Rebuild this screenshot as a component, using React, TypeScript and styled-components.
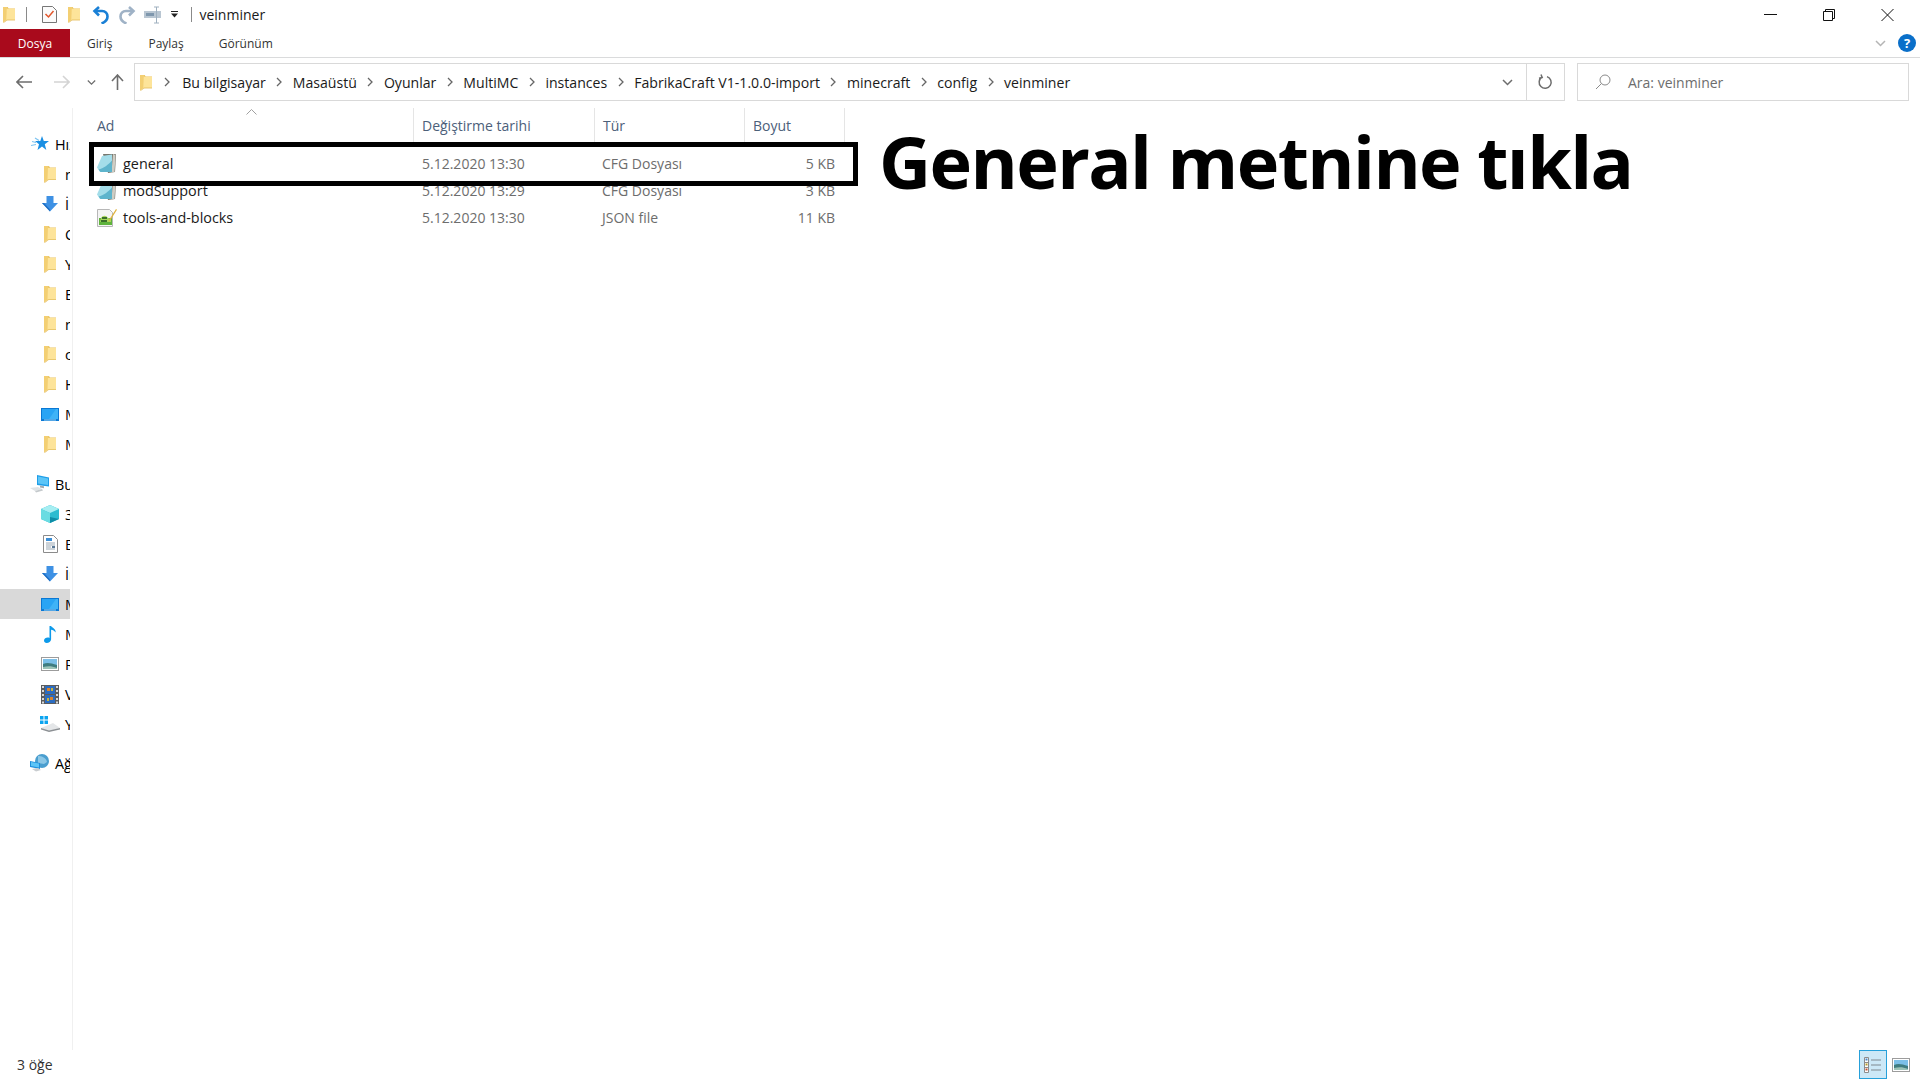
import React from 'react';
import styled, { createGlobalStyle } from 'styled-components';

const Global = createGlobalStyle`
  html, body { margin: 0; padding: 0; background: #fff; }
  body { font-family: "Open Sans", "Noto Sans", sans-serif; font-size: 14px; color: #1a1a1a; }
  svg { display: block; flex: none; }
`;

const Window = styled.div`
  width: 1920px;
  height: 1079px;
  display: flex;
  flex-direction: column;
  overflow: hidden;
  position: relative;
  background: #fff;
`;

const TitleBar = styled.div`
  height: 29px;
  display: flex;
  align-items: center;
  flex: none;
`;

const QuickSlot = styled.div<{ $left: number }>`
  margin-left: ${(p) => p.$left}px;
  display: flex;
  align-items: center;
`;

const VSep = styled.div<{ $left: number }>`
  margin-left: ${(p) => p.$left}px;
  width: 1px;
  height: 15px;
  background: #8a8a8a;
`;

const TitleText = styled.span`
  margin-left: 7px;
  font-size: 14px;
  color: #1a1a1a;
`;

const WindowButtons = styled.div`
  margin-left: auto;
  display: flex;
  align-items: center;
  gap: 46px;
  padding-right: 26px;
`;

const Tabs = styled.div`
  height: 28px;
  flex: none;
  display: flex;
  align-items: stretch;
  border-bottom: 1px solid #dadbdc;
  position: relative;
`;

const FileTab = styled.div`
  width: 70px;
  background: #a90a1c;
  color: #fff;
  font-size: 12px;
  display: flex;
  align-items: center;
  justify-content: center;
`;

const Tab = styled.div<{ $left: number }>`
  margin-left: ${(p) => p.$left}px;
  font-size: 12px;
  color: #333;
  display: flex;
  align-items: center;
`;

const RibbonEnd = styled.div`
  margin-left: auto;
  display: flex;
  align-items: center;
  gap: 11px;
  padding-right: 4px;
`;

const HelpDot = styled.div`
  width: 18px;
  height: 18px;
  border-radius: 50%;
  background: #0a6fc9;
  color: #fff;
  font-size: 13px;
  font-weight: 700;
  display: flex;
  align-items: center;
  justify-content: center;
`;

const NavRow = styled.div`
  height: 50px;
  flex: none;
  display: flex;
  align-items: flex-start;
  padding-top: 5px;
  box-sizing: border-box;
`;

const NavButtons = styled.div`
  width: 134px;
  height: 38px;
  flex: none;
  display: flex;
  align-items: center;
  padding-left: 16px;
  box-sizing: border-box;
`;

const NavSlot = styled.div<{ $left: number }>`
  margin-left: ${(p) => p.$left}px;
`;

const AddressBox = styled.div`
  width: 1431px;
  height: 38px;
  box-sizing: border-box;
  border: 1px solid #d9d9d9;
  display: flex;
  align-items: center;
  flex: none;
`;

const Crumbs = styled.div`
  flex: 1;
  display: flex;
  align-items: center;
  padding-left: 5px;
  height: 100%;
`;

const Crumb = styled.span`
  font-size: 14.1px;
  color: #1a1a1a;
  white-space: nowrap;
`;

const CrumbArrow = styled.div<{ $wide?: boolean }>`
  width: ${(p) => (p.$wide ? 30 : 27)}px;
  display: flex;
  justify-content: center;
  flex: none;
`;

const AddressEnd = styled.div`
  width: 38px;
  height: 100%;
  display: flex;
  align-items: center;
  justify-content: center;
  border-left: 1px solid #d9d9d9;
  box-sizing: border-box;
`;

const DropSlot = styled.div`
  width: 38px;
  display: flex;
  justify-content: center;
`;

const SearchBox = styled.div`
  width: 332px;
  height: 38px;
  margin-left: 12px;
  box-sizing: border-box;
  border: 1px solid #d9d9d9;
  display: flex;
  align-items: center;
  padding-left: 17px;
  gap: 17px;
  font-size: 14px;
  color: #6d6d6d;
  flex: none;
`;

const Main = styled.div`
  flex: 1;
  min-height: 0;
  display: flex;
  position: relative;
`;

const Sidebar = styled.nav`
  width: 73px;
  flex: none;
  box-sizing: border-box;
  padding: 21px 2px 0 0;
  border-right: 1px solid #f0f0f0;
`;

const NavItem = styled.div<{ $selected?: boolean; $top?: boolean; $gap?: number }>`
  height: 30px;
  display: flex;
  align-items: center;
  overflow: hidden;
  white-space: nowrap;
  margin-top: ${(p) => p.$gap ?? 0}px;
  padding-left: ${(p) => (p.$top ? 31 : 41)}px;
  background: ${(p) => (p.$selected ? '#d9d9d9' : 'transparent')};
  font-size: 14.4px;
  color: #000;
`;

const NavIcon = styled.div`
  width: 18px;
  height: 18px;
  display: flex;
  align-items: center;
  justify-content: center;
  margin-right: 6px;
  flex: none;
`;

const FileArea = styled.div`
  flex: 1;
  min-width: 0;
  padding-left: 16px;
  position: relative;
`;

const HeaderRow = styled.div`
  height: 34px;
  width: 756px;
  display: grid;
  grid-template-columns: 325px 181px 150px 100px;
  position: relative;
`;

const HeaderCell = styled.div`
  display: flex;
  align-items: center;
  padding-left: 8px;
  font-size: 14px;
  color: #4c607a;
  border-right: 1px solid #e5e5e5;
  box-sizing: border-box;
`;

const SortMark = styled.div`
  position: absolute;
  left: 157px;
  top: 1px;
`;

const FileRows = styled.div`
  padding-top: 8px;
`;

const FileRow = styled.div`
  height: 27px;
  width: 756px;
  display: grid;
  grid-template-columns: 325px 180px 151px 90px;
  align-items: center;
  font-size: 14px;
  color: #6d6d6d;
`;

const NameCell = styled.div`
  display: flex;
  align-items: center;
  padding-left: 8px;
  gap: 6px;
  font-size: 14.4px;
  color: #1a1a1a;
`;

const DataCell = styled.div`
  padding-left: 8px;
`;

const SizeCell = styled.div`
  text-align: right;
`;

const Highlight = styled.div`
  position: absolute;
  left: 16px;
  top: 34px;
  width: 769px;
  height: 44px;
  box-sizing: border-box;
  border: 5px solid #000;
`;

const Callout = styled.div`
  position: absolute;
  left: 806px;
  top: 3px;
  font-size: 72px;
  letter-spacing: -1.6px;
  line-height: 100px;
  font-weight: 700;
  color: #000;
  white-space: nowrap;
`;

const StatusBar = styled.div`
  height: 29px;
  flex: none;
  display: flex;
  align-items: center;
  padding-left: 17px;
  font-size: 14px;
  color: #333;
`;

const ViewButtons = styled.div`
  margin-left: auto;
  display: flex;
  align-items: center;
  padding-right: 5px;
  height: 100%;
`;

const ViewButton = styled.div<{ $active?: boolean }>`
  width: 28px;
  height: 29px;
  box-sizing: border-box;
  display: flex;
  align-items: center;
  justify-content: center;
  background: ${(p) => (p.$active ? '#cce8f7' : 'transparent')};
  border: ${(p) => (p.$active ? '1px solid #26a0da' : 'none')};
`;

const Folder = ({ size = 18 }: { size?: number }) => (
  <svg width={size * 0.72} height={size} viewBox="0 0 13 18">
    <path d="M0 1h5l1 1.500h7V15H0z" fill="#e9c463" />
    <path d="M0 1h4.500v13.500L0 17.500z" fill="#f3cf73" />
    <path d="M4 3h9v11.500H3.500L4 3z" fill="#fde49a" />
    <path d="M0 17.500 4.500 14.500H13V15H4.600L1 17.800z" fill="#e2bd62" />
  </svg>
);

const DownArrow = () => (
  <svg width="18" height="16" viewBox="0 0 18 16">
    <path d="M5.500 0h7v7H17l-8 8.500L1 7h4.500z" fill="#3e91e4" />
    <path d="M9 15.500 1 7h2l6 6.500z" fill="#1f6fc4" />
  </svg>
);

const Desktop = () => (
  <svg width="18" height="13" viewBox="0 0 18 13">
    <rect x="0" y="0" width="18" height="13" fill="#0a78d4" />
    <rect x="1" y="1" width="16" height="10" fill="#29a4f4" />
    <path d="M8 11 15 1h2v10z" fill="#3fb3f7" />
    <rect x="3" y="11.500" width="12" height="1" fill="#9ed5f7" />
  </svg>
);

const ThisPc = () => (
  <svg width="20" height="18" viewBox="0 0 20 18">
    <path d="M7 0l12 2.500v9L7 10z" fill="#1f9ee8" />
    <path d="M8 1.500l10 2v6.500L8 8.500z" fill="#5cc5f7" />
    <path d="M0 13l8-1 4 2-7 2z" fill="#dfe3e6" />
    <path d="M5 16l7-2 1 1.500-7 2z" fill="#c4c9cc" />
    <path d="M10 10.500l4 .8v2l-4-.8z" fill="#a5abb0" />
  </svg>
);

const Cube = () => (
  <svg width="18" height="18" viewBox="0 0 18 18">
    <path d="M9 0l9 4v10l-9 4-9-4V4z" fill="#2bbcd0" />
    <path d="M9 0l9 4-9 4-9-4z" fill="#a6eef2" />
    <path d="M0 4l9 4v10l-9-4z" fill="#6adce2" />
    <path d="M9 12l9 2-9 4z" fill="#0e8da7" />
  </svg>
);

const DocIcon = () => (
  <svg width="15" height="18" viewBox="0 0 15 18">
    <path d="M.5.500h10l4 4v13H.5z" fill="#fff" stroke="#8b8b8b" />
    <rect x="3" y="3" width="6" height="3" fill="#3d8fd6" />
    <path d="M3 8h9M3 10h9M3 12h5M3 14h9" stroke="#9aa7b2" />
    <rect x="9" y="11" width="3" height="2" fill="#5b7a98" />
  </svg>
);

const Note = () => (
  <svg width="13" height="18" viewBox="0 0 13 18">
    <path d="M5.500 1h1.600c1 2 4.800 2.400 4.600 6.500-1.200-1.800-2.900-2.600-4.600-2.800V14.200c0 2.300-2.300 3.800-4.500 3.800C1.100 18 0 17 0 15.600c0-1.800 2-3 3.700-3 .7 0 1.300.1 1.800.4z" fill="#0d9aea" />
  </svg>
);

const Picture = ({ w = 18, h = 14 }: { w?: number; h?: number }) => (
  <svg width={w} height={h} viewBox="0 0 18 14">
    <rect x=".5" y=".5" width="17" height="13" fill="#fff" stroke="#9c9c9c" />
    <rect x="2" y="2" width="14" height="10" fill="#7bbfe8" />
    <path d="M2 7c4-2 8-1 14 1v4H2z" fill="#3f7c80" />
    <path d="M2 10c5-1 9-1 14 1v1H2z" fill="#9cc3b8" />
  </svg>
);

const Film = () => (
  <svg width="18" height="19" viewBox="0 0 18 19">
    <rect width="18" height="19" fill="#5c5c5c" />
    <path d="M1 1h2v2H1zM1 5h2v2H1zM1 9h2v2H1zM1 13h2v2H1zM1 16.500h2v2H1zM15 1h2v2h-2zM15 5h2v2h-2zM15 9h2v2h-2zM15 13h2v2h-2zM15 16.500h2v2h-2z" fill="#d9d9d9" />
    <rect x="4" y="1" width="10" height="8" fill="#2c6cc0" />
    <rect x="4" y="10" width="10" height="8" fill="#2c6cc0" />
    <path d="M6 3h3v3H6zM9 12h3v3H9z" fill="#d8842e" />
    <path d="M10 3h2v3h-2zM6 13h2v3H6z" fill="#c9b23a" />
  </svg>
);

const Drive = () => (
  <svg width="20" height="16" viewBox="0 0 20 16">
    <path d="M0 0h3.500v3.500H0zM4.500 0H8v3.500H4.500zM0 4.500h3.500V8H0zM4.500 4.500H8V8H4.500z" fill="#0ba4f0" />
    <path d="M1 12l12-5 7 5-11 3.500z" fill="#e4e6e8" />
    <path d="M1 12l8 2.500 11-2.500v1.500l-11 2.500-8-2.500z" fill="#8c9094" />
  </svg>
);

const Network = () => (
  <svg width="20" height="18" viewBox="0 0 20 18">
    <circle cx="12" cy="7" r="7" fill="#4a9ecf" />
    <path d="M8 2c3 0 8 1 9 6l-3 2-6-1z" fill="#8cc7e6" />
    <path d="M0 7l10 2v6L0 13z" fill="#1f8fdc" />
    <path d="M1 8l8 1.600v4L1 12z" fill="#5cc5f7" />
    <path d="M2 15l6-1 3 2-5 1.500z" fill="#c9cdd0" />
  </svg>
);

const Star = () => (
  <svg width="18" height="16" viewBox="0 0 18 16">
    <path d="M11 0l1.800 5H18l-4.200 3.200L15.300 14 11 10.500 6.500 14 8 8.200 4 5h5.300z" fill="#1a8fe3" />
    <path d="M4 2l4 2.500M1 5.500l4 1M0 9.500l5-1" stroke="#7cc3f0" strokeWidth="1.200" />
  </svg>
);

const CfgIcon = () => (
  <svg width="20" height="20" viewBox="0 0 20 20">
    <path d="M6 0l12-1 1 2-1 17-7 1z" fill="#77776e" />
    <path d="M16 0l2.500 1-1 17-3 .5z" fill="#cfcdc4" />
    <path d="M5 2l10-1.500L15 18H3L0 13.500z" fill="#a4dde9" />
    <path d="M1.500 15.500c5-1 10-5 13.500-9V18H3.500z" fill="#5eb4cc" />
  </svg>
);

const JsonIcon = () => (
  <svg width="20" height="20" viewBox="0 0 20 20">
    <path d="M.5 1.500h12l3 3V18.500H.5z" fill="#f4f4f4" stroke="#b7b7b7" />
    <rect x="2" y="10" width="13" height="7" fill="#5fb33c" />
    <path d="M4 10c2-3 5-3 7 0l3 1v3H3z" fill="#a8d65c" />
    <path d="M5 9h5v2H5zM4 12h6v2H4z" fill="#3a6f2a" />
    <path d="M12 12 19 1l1 .8-7 11-1.500 1z" fill="#e0b23c" />
  </svg>
);

const Chevron = ({ color = '#666' }: { color?: string }) => (
  <svg width="6" height="10" viewBox="0 0 6 10">
    <path d="M1 1l4 4-4 4" fill="none" stroke={color} strokeWidth="1.300" />
  </svg>
);

const SmallDown = ({ w = 11, color = '#6d6d6d' }: { w?: number; color?: string }) => (
  <svg width={w} height="7" viewBox="0 0 11 7">
    <path d="M1 1l4.500 4.500L10 1" fill="none" stroke={color} strokeWidth="1.500" />
  </svg>
);

const topNav = [
  { icon: <Folder />, label: 'r' },
  { icon: <DownArrow />, label: 'İ' },
  { icon: <Folder />, label: 'C' },
  { icon: <Folder />, label: 'Y' },
  { icon: <Folder />, label: 'E' },
  { icon: <Folder />, label: 'r' },
  { icon: <Folder />, label: 'c' },
  { icon: <Folder />, label: 'H' },
  { icon: <Desktop />, label: 'M' },
  { icon: <Folder />, label: 'M' },
];

const pcNav = [
  { icon: <Cube />, label: '3B Nesneler' },
  { icon: <DocIcon />, label: 'Belgeler' },
  { icon: <DownArrow />, label: 'İndirilenler' },
  { icon: <Desktop />, label: 'Masaüstü', selected: true },
  { icon: <Note />, label: 'Müzik' },
  { icon: <Picture />, label: 'Resimler' },
  { icon: <Film />, label: 'Videolar' },
  { icon: <Drive />, label: 'Yerel Disk (C:)' },
];

const crumbs = [
  'Bu bilgisayar',
  'Masaüstü',
  'Oyunlar',
  'MultiMC',
  'instances',
  'FabrikaCraft V1-1.0.0-import',
  'minecraft',
  'config',
  'veinminer',
];

const files = [
  { name: 'general', date: '5.12.2020 13:30', type: 'CFG Dosyası', size: '5 KB', icon: <CfgIcon /> },
  { name: 'modSupport', date: '5.12.2020 13:29', type: 'CFG Dosyası', size: '3 KB', icon: <CfgIcon /> },
  { name: 'tools-and-blocks', date: '5.12.2020 13:30', type: 'JSON file', size: '11 KB', icon: <JsonIcon /> },
];

export default function App() {
  return (
    <Window>
      <Global />
      <TitleBar>
        <QuickSlot $left={3}><Folder size={17} /></QuickSlot>
        <VSep $left={11} />
        <QuickSlot $left={15}>
          <svg width="15" height="17" viewBox="0 0 15 17">
            <path d="M.5.500h10l4 4v12H.5z" fill="#fbfbfb" stroke="#777" />
            <path d="M3.500 8l3 3 5-6" fill="none" stroke="#e2562b" strokeWidth="1.500" />
          </svg>
        </QuickSlot>
        <QuickSlot $left={11}><Folder size={17} /></QuickSlot>
        <QuickSlot $left={12}>
          <svg width="17" height="18" viewBox="0 0 17 18">
            <path d="M3 5h7c3.500 0 5.500 2.500 5.500 5.500 0 3-2 5.500-6 7" fill="none" stroke="#1a80d6" strokeWidth="2.600" />
            <path d="M7 1 2.500 5 7 9.500" fill="none" stroke="#1a80d6" strokeWidth="2.600" />
          </svg>
        </QuickSlot>
        <QuickSlot $left={10}>
          <svg width="17" height="18" viewBox="0 0 17 18">
            <path d="M14 5H7C3.500 5 1.500 7.500 1.500 10.500c0 3 2 5.500 6 7" fill="none" stroke="#9fb2c6" strokeWidth="2.600" />
            <path d="M10 1l4.500 4L10 9.500" fill="none" stroke="#9fb2c6" strokeWidth="2.600" />
          </svg>
        </QuickSlot>
        <QuickSlot $left={8}>
          <svg width="18" height="18" viewBox="0 0 18 18">
            <rect x="0" y="5" width="17" height="7" fill="#b9c6d2" />
            <rect x="2" y="7" width="8" height="3" fill="#7f97ad" />
            <path d="M10 1h5M12.500 1v16M10 17h5" stroke="#9fb0bf" fill="none" />
          </svg>
        </QuickSlot>
        <QuickSlot $left={9}>
          <svg width="8" height="7" viewBox="0 0 8 7">
            <path d="M0 0h7v1H0zM0 2.500h7L3.500 6.500z" fill="#222" />
          </svg>
        </QuickSlot>
        <VSep $left={12} />
        <TitleText>veinminer</TitleText>
        <WindowButtons>
          <svg width="13" height="11" viewBox="0 0 13 11"><path d="M0 5.500h13" stroke="#111" strokeWidth="1" /></svg>
          <svg width="12" height="12" viewBox="0 0 12 12">
            <path d="M.5 2.500h9v9h-9zM2.500 2.500v-2h9v9h-2" fill="none" stroke="#111" />
          </svg>
          <svg width="13" height="12" viewBox="0 0 13 12"><path d="M.5 0l12 12M12.500 0l-12 12" stroke="#111" /></svg>
        </WindowButtons>
      </TitleBar>

      <Tabs>
        <FileTab>Dosya</FileTab>
        <Tab $left={17}>Giriş</Tab>
        <Tab $left={36}>Paylaş</Tab>
        <Tab $left={35}>Görünüm</Tab>
        <RibbonEnd>
          <SmallDown w={13} color="#b5b5b5" />
          <HelpDot>?</HelpDot>
        </RibbonEnd>
      </Tabs>

      <NavRow>
        <NavButtons>
          <svg width="16" height="14" viewBox="0 0 16 14"><path d="M7 1 1 7l6 6M1 7h15" fill="none" stroke="#6d6d6d" strokeWidth="1.600" /></svg>
          <NavSlot $left={22}>
            <svg width="16" height="14" viewBox="0 0 16 14"><path d="M9 1l6 6-6 6M15 7H0" fill="none" stroke="#d4d4d4" strokeWidth="1.600" /></svg>
          </NavSlot>
          <NavSlot $left={17}><SmallDown w={9} /></NavSlot>
          <NavSlot $left={15}>
            <svg width="13" height="16" viewBox="0 0 13 16"><path d="M1 7l5.500-6L12 7M6.500 1v15" fill="none" stroke="#6d6d6d" strokeWidth="1.600" /></svg>
          </NavSlot>
        </NavButtons>
        <AddressBox>
          <Crumbs>
            <Folder size={17} />
            <CrumbArrow $wide><Chevron /></CrumbArrow>
            {crumbs.map((c, i) => (
              <React.Fragment key={c}>
                {i > 0 && <CrumbArrow><Chevron /></CrumbArrow>}
                <Crumb>{c}</Crumb>
              </React.Fragment>
            ))}
          </Crumbs>
          <DropSlot><SmallDown /></DropSlot>
          <AddressEnd>
            <svg width="15" height="16" viewBox="0 0 15 16">
              <path d="M4 3.200a6 6 0 1 0 5-.6M3 .5l1.200 3L1 4.200" fill="none" stroke="#6d6d6d" strokeWidth="1.500" />
            </svg>
          </AddressEnd>
        </AddressBox>
        <SearchBox>
          <svg width="16" height="16" viewBox="0 0 16 16">
            <circle cx="10" cy="6" r="5" fill="none" stroke="#8a8a8a" />
            <path d="M6.500 9.500 1 15" stroke="#8a8a8a" />
          </svg>
          Ara: veinminer
        </SearchBox>
      </NavRow>

      <Main>
        <Sidebar>
          <NavItem $top>
            <NavIcon><Star /></NavIcon>Hızlı erişim
          </NavItem>
          {topNav.map((n, i) => (
            <NavItem key={i}>
              <NavIcon>{n.icon}</NavIcon>{n.label}
            </NavItem>
          ))}
          <NavItem $top $gap={10}>
            <NavIcon><ThisPc /></NavIcon>Bu bilgisayar
          </NavItem>
          {pcNav.map((n) => (
            <NavItem key={n.label} $selected={n.selected}>
              <NavIcon>{n.icon}</NavIcon>{n.label}
            </NavItem>
          ))}
          <NavItem $top $gap={9}>
            <NavIcon><Network /></NavIcon>Ağ
          </NavItem>
        </Sidebar>

        <FileArea>
          <HeaderRow>
            <HeaderCell>Ad</HeaderCell>
            <HeaderCell>Değiştirme tarihi</HeaderCell>
            <HeaderCell>Tür</HeaderCell>
            <HeaderCell>Boyut</HeaderCell>
            <SortMark>
              <svg width="11" height="6" viewBox="0 0 11 6"><path d="M.5 5.500l5-5 5 5" fill="none" stroke="#a0a0a0" /></svg>
            </SortMark>
          </HeaderRow>
          <FileRows>
            {files.map((f) => (
              <FileRow key={f.name}>
                <NameCell>{f.icon}{f.name}</NameCell>
                <DataCell>{f.date}</DataCell>
                <DataCell>{f.type}</DataCell>
                <SizeCell>{f.size}</SizeCell>
              </FileRow>
            ))}
          </FileRows>
          <Highlight />
          <Callout>General metnine tıkla</Callout>
        </FileArea>
      </Main>

      <StatusBar>
        3 öğe
        <ViewButtons>
          <ViewButton $active>
            <svg width="18" height="16" viewBox="0 0 18 16">
              <path d="M.5.500h4v15h-4zM.5 5.500h4M.5 10.500h4" fill="#fff" stroke="#8c8c8c" />
              <rect x="1.500" y="1.500" width="2" height="2" fill="#4a86c5" />
              <rect x="1.500" y="6.500" width="2" height="2" fill="#b79a28" />
              <rect x="1.500" y="11.500" width="2" height="2" fill="#c9502c" />
              <path d="M7 3h10M7 8h10M7 13h10" stroke="#7f8890" strokeWidth="1.200" />
            </svg>
          </ViewButton>
          <ViewButton><Picture /></ViewButton>
        </ViewButtons>
      </StatusBar>
    </Window>
  );
}
